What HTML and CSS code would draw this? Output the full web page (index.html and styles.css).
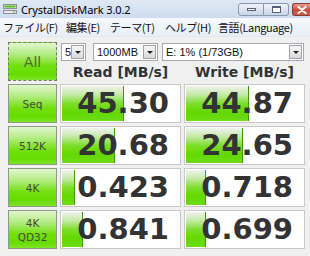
FILE: index.html
```html
<!DOCTYPE html>
<html lang="ja">
<head>
<meta charset="utf-8">
<title>CrystalDiskMark 3.0.2</title>
<link rel="stylesheet" href="styles.css">
</head>
<body>
<div class="window">
  <div class="titlebar">
    <svg class="app-icon" width="14" height="12" viewBox="0 0 14 12">
      <rect x="0.5" y="1.5" width="13" height="4" fill="#dfe3e6" stroke="#8a9096"/>
      <rect x="1.5" y="2.5" width="11" height="2" fill="#58c020"/>
      <rect x="0.5" y="7.5" width="13" height="3" fill="#e8eaec" stroke="#8a9096"/>
      <rect x="10" y="8.5" width="2" height="1" fill="#50b020"/>
    </svg>
    <span class="title">CrystalDiskMark 3.0.2</span>
    <div class="controls">
      <div class="ctl ctl-min"><span class="dash"></span></div>
      <div class="ctl ctl-max"><span class="box"></span></div>
      <div class="ctl ctl-close">
        <svg width="10" height="8" viewBox="0 0 10 8"><path d="M1.5 1 L8.5 7 M8.5 1 L1.5 7" stroke="#fff" stroke-width="2" stroke-linecap="round"/></svg>
      </div>
    </div>
  </div>
  <div class="menubar">
    <span class="menu m-file">ファイル(F)</span>
    <span class="menu m-edit">編集(E)</span>
    <span class="menu m-theme">テーマ(T)</span>
    <span class="menu m-help">ヘルプ(H)</span>
    <span class="menu">言語(Language)</span>
  </div>
  <div class="bench">
    <div class="btn btn-all">All</div>
    <div class="top">
      <div class="combos">
        <div class="combo c-count"><span class="val">5</span><span class="arrow"></span></div>
        <div class="combo c-size"><span class="val">1000MB</span><span class="arrow"></span></div>
        <div class="combo c-drive"><span class="val">E: 1% (1/73GB)</span><span class="arrow"></span></div>
      </div>
      <div class="heads">
        <div class="head">Read [MB/s]</div>
        <div class="head">Write [MB/s]</div>
      </div>
    </div>

    <div class="btn">Seq</div>
    <div class="cell"><div class="bar" style="width:62px"></div><span class="num">45.30</span></div>
    <div class="cell"><div class="bar" style="width:63px"></div><span class="num">44.87</span></div>

    <div class="btn">512K</div>
    <div class="cell"><div class="bar" style="width:53px"></div><span class="num">20.68</span></div>
    <div class="cell"><div class="bar" style="width:57px"></div><span class="num">24.65</span></div>

    <div class="btn">4K</div>
    <div class="cell"><div class="bar" style="width:13px"></div><span class="num">0.423</span></div>
    <div class="cell"><div class="bar" style="width:20px"></div><span class="num">0.718</span></div>

    <div class="btn two">4K<br>QD32</div>
    <div class="cell"><div class="bar" style="width:21px"></div><span class="num">0.841</span></div>
    <div class="cell"><div class="bar" style="width:20px"></div><span class="num">0.699</span></div>
  </div>
</div>
</body>
</html>
```

FILE: styles.css
```css
html, body {
  margin: 0;
  padding: 0;
  background: #f0f0f0;
}
.window {
  width: 310px;
  height: 256px;
  overflow: hidden;
  background: #f0f0f0;
  font-family: "Liberation Sans", "Noto Sans CJK JP", sans-serif;
}
.titlebar {
  height: 18px;
  display: flex;
  align-items: center;
  background: linear-gradient(#dfe9f5, #cddcee);
  padding-left: 3px;
}
.app-icon {
  flex: none;
  margin-right: 4px;
}
.title {
  font-family: "Noto Sans", sans-serif;
  font-size: 11px;
  color: #000;
  letter-spacing: -0.1px;
}
.controls {
  margin-left: auto;
  display: flex;
  align-self: flex-start;
  padding-top: 3px;
}
.ctl {
  height: 13px;
  border: 1px solid #8798b0;
  display: flex;
  align-items: center;
  justify-content: center;
  box-sizing: border-box;
}
.ctl-min {
  width: 26px;
  border-radius: 3px 0 0 3px;
  background: linear-gradient(#eef3f9, #c9d6e6);
}
.ctl-max {
  width: 25px;
  border-left: none;
  border-radius: 0 3px 3px 0;
  background: linear-gradient(#eef3f9, #c9d6e6);
  margin-right: 3px;
}
.ctl-close {
  width: 18px;
  border-color: #8a3a30;
  border-right: none;
  border-radius: 3px 0 0 3px;
  background: linear-gradient(#e8a090, #c84a38 55%, #d06050);
}
.dash {
  width: 9px;
  height: 3px;
  background: #fff;
  border: 1px solid #55607a;
  box-sizing: border-box;
}
.box {
  width: 9px;
  height: 7px;
  border: 1px solid #55607a;
  border-top-width: 2px;
  box-sizing: border-box;
  background: #fff;
}
.menubar {
  height: 18px;
  display: flex;
  align-items: center;
  padding-left: 3px;
  background: linear-gradient(#f6f9fd, #e9eff7);
  border-bottom: 1px solid #e2e8f0;
}
.menu {
  flex: none;
  font-family: "Noto Sans CJK JP", sans-serif;
  font-size: 11px;
  color: #111;
  letter-spacing: -0.4px;
}
.m-file { width: 63px; }
.m-edit { width: 44px; }
.m-theme { width: 55px; }
.m-help { width: 53px; }
.bench {
  display: grid;
  grid-template-columns: 49px 121px 121px;
  grid-auto-rows: 39px;
  column-gap: 3px;
  row-gap: 3px;
  padding: 5px 5px 0 8px;
}
.btn {
  box-sizing: border-box;
  border: 1px solid #8d9a86;
  background: linear-gradient(#e2f6d0 0%, #b4ec84 30%, #72e010 62%, #66dc00 85%, #7ee42a 100%);
  display: flex;
  align-items: center;
  justify-content: center;
  text-align: center;
  font-family: "DejaVu Sans", sans-serif;
  font-size: 10.5px;
  line-height: 14px;
  color: #414a3a;
}
.btn-all {
  border: 1px dashed #6f7c68;
  font-size: 14px;
  color: #4d6a35;
}
.top {
  grid-column: 2 / 4;
  display: flex;
  flex-direction: column;
}
.combos {
  display: flex;
  height: 18px;
  padding-top: 1px;
}
.combo {
  box-sizing: border-box;
  height: 18px;
  border: 1px solid #a7a9ad;
  background: #fff;
  display: flex;
  align-items: center;
  justify-content: space-between;
  padding-left: 3px;
  font-size: 11px;
  color: #111;
}
.c-count { width: 25px; margin-left: 1px; }
.c-size { width: 65px; margin-left: 7px; }
.c-drive { width: 142px; margin-left: 4px; }
.arrow {
  width: 13px;
  height: 14px;
  margin-right: 1px;
  box-sizing: border-box;
  border: 1px solid #a0a4aa;
  background: linear-gradient(#f6f6f6, #dadada);
  position: relative;
}
.arrow::after {
  content: "";
  position: absolute;
  left: 3px;
  top: 5px;
  border-left: 3px solid transparent;
  border-right: 3px solid transparent;
  border-top: 3px solid #222;
}
.heads {
  display: grid;
  grid-template-columns: 121px 121px;
  column-gap: 3px;
  margin-top: 2px;
}
.head {
  text-align: center;
  font-family: "DejaVu Sans", sans-serif;
  font-weight: bold;
  font-size: 14px;
  line-height: 19px;
  color: #333;
}
.cell {
  position: relative;
  box-sizing: border-box;
  border: 1px solid #c9c9c9;
  background: #fff;
  display: flex;
  align-items: center;
  justify-content: flex-end;
  padding-right: 11px;
}
.bar {
  position: absolute;
  left: 1px;
  top: 1px;
  bottom: 1px;
  box-sizing: border-box;
  border-right: 1px solid #3d9a0a;
  background: linear-gradient(#f0f2ef 0%, #c4eaa6 25%, #7ede2a 50%, #62d800 75%, #6edc18 100%);
}
.num {
  position: relative;
  font-family: "DejaVu Sans", sans-serif;
  font-weight: bold;
  font-size: 29px;
  line-height: 30px;
  margin-top: -2px;
  color: #333;
}
```
